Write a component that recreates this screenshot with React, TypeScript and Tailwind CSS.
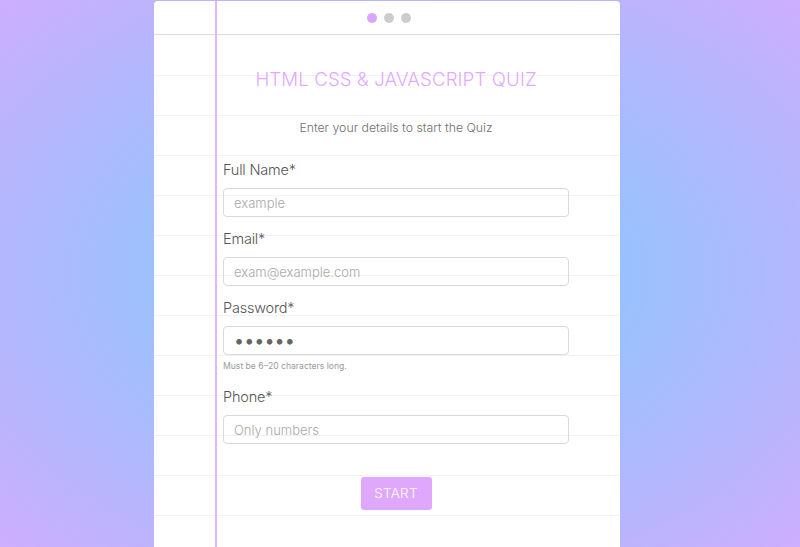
import type { ReactElement } from "react";

type Field = {
  label: string;
  type: string;
  placeholder?: string;
  value?: string;
  hint?: string;
};

const fields: Field[] = [
  { label: "Full Name*", type: "text", placeholder: "example" },
  { label: "Email*", type: "email", placeholder: "exam@example.com" },
  { label: "Password*", type: "password", value: "secret", hint: "Must be 6–20 characters long." },
  { label: "Phone*", type: "tel", placeholder: "Only numbers" }
];

const App = (): ReactElement => {
  return (
    <div
      className="min-h-screen w-full overflow-hidden bg-[radial-gradient(ellipse_at_center,#93c5fd_0%,#96c3fd_35%,#b3b7fd_70%,#cdaefd_100%)] flex justify-center"
      style={{ fontFamily: "Inter, 'Noto Sans', sans-serif" }}
    >
      <div className="relative mt-px mr-[26px] w-[466px] h-[546px] bg-white rounded-t-[4px] flex flex-col overflow-hidden">
        {/* margin line */}
        <div className="absolute left-[61px] top-0 bottom-0 w-[2px] bg-[#e3b6ff]" />

        <div className="h-[34px] shrink-0 border-b border-[#dcdcdc] flex items-center justify-center gap-[7px] pl-[3px] pt-px">
          <span className="w-[10px] h-[10px] rounded-full bg-[#dca6ff]" />
          <span className="w-[10px] h-[10px] rounded-full bg-[#cccccc]" />
          <span className="w-[10px] h-[10px] rounded-full bg-[#cccccc]" />
        </div>

        <div className="flex-1 pl-[69px] pr-[51px] bg-[repeating-linear-gradient(to_bottom,transparent_0px,transparent_39px,#f2f2f2_39px,#f2f2f2_40px)] bg-[position:0_1px]">
          <h1 className="mt-[31px] text-center text-[18.7px] leading-[28px] font-light tracking-[0.1px] text-[#e2aaff]">
            HTML CSS &amp; JAVASCRIPT QUIZ
          </h1>
          <p className="mt-[24px] text-center text-[12.3px] leading-[20px] font-light text-[#6f6f6f]">
            Enter your details to start the Quiz
          </p>

          <form className="mt-[22px] flex flex-col" onSubmit={e => e.preventDefault()}>
            {fields.map(f => (
              <div key={f.label} className="flex flex-col mb-[12px]">
                <label className="text-[14.5px] leading-[20px] font-light text-[#555] tracking-[-0.2px]">{f.label}</label>
                <input
                  type={f.type}
                  placeholder={f.placeholder}
                  defaultValue={f.value}
                  className={
                    f.type === "password"
                      ? "mt-[8px] h-[29px] w-full rounded-[4px] border border-[#d9d9d9] px-[10px] text-[18px] tracking-[0px] text-[#666] outline-none"
                      : "mt-[8px] h-[29px] w-full rounded-[4px] border border-[#d9d9d9] px-[10px] text-[13px] font-light text-[#666] placeholder:text-[#a9a9a9] outline-none"
                  }
                />
                {f.hint && (
                  <span className="mt-[5px] mb-[3px] text-[8.6px] leading-[12px] text-[#9a9a9a]">{f.hint}</span>
                )}
              </div>
            ))}

            <div className="flex justify-center mt-[21px]">
              <button
                type="submit"
                className="w-[71px] h-[33px] rounded-[3px] bg-[#dfa8fd] text-white text-[13.5px] font-light tracking-[0.3px]"
              >
                START
              </button>
            </div>
          </form>
        </div>
      </div>
    </div>
  );
};

export default App;
